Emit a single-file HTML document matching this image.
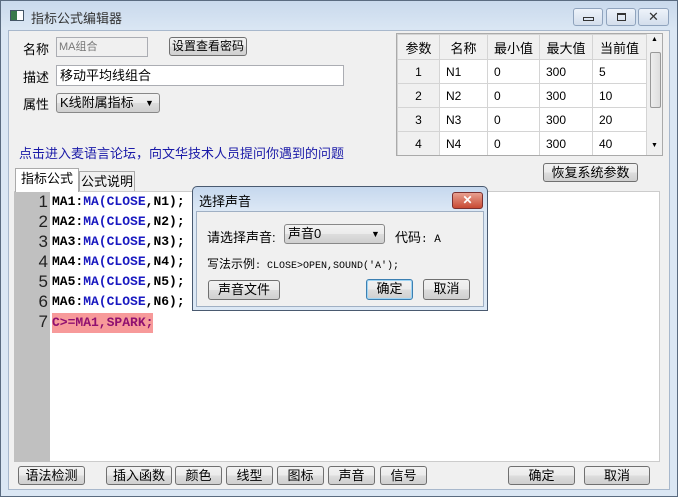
<!DOCTYPE html>
<html><head><meta charset="utf-8"><style>
*{box-sizing:border-box;margin:0;padding:0}
body{width:678px;height:497px;overflow:hidden;background:#dbe7f4;font-family:"Liberation Sans","Noto Sans CJK SC",sans-serif;font-size:12px;color:#000;position:relative}
.a{position:absolute}
.win{left:0;top:0;width:678px;height:497px;border:1px solid #5a6b80;background:linear-gradient(#c9d9ec,#dbe7f4 30px)}
.client{left:8px;top:30px;width:662px;height:460px;background:#f0f0f0;border:1px solid #a8b8cc}
.btn{position:absolute;border:1px solid #707070;border-radius:3px;background:linear-gradient(#f2f2f2,#ebebeb 50%,#dddddd 51%,#cfcfcf);text-align:center;font-size:13px;line-height:17px;white-space:nowrap;overflow:hidden}
.inp{position:absolute;border:1px solid #abadb3;background:#fff}
.tb{position:absolute;top:8px;height:18px;border:1px solid #8fa3bd;border-radius:3px;background:linear-gradient(#eef3fa,#d3deec)}
table{border-collapse:collapse}
td{border:1px solid #d4d4d4;height:24px;font-size:12px;padding-left:6px}
.code{font-family:"Liberation Mono",monospace;font-weight:bold;font-size:13px;line-height:20px;position:absolute;left:52px;white-space:pre}
.ln{position:absolute;left:14px;width:34px;text-align:right;font-family:"Liberation Sans",sans-serif;font-size:17px;line-height:20px;color:#222}
.b{color:#1818c0}
</style></head><body>
<div class="a win"></div>
<div class="a" style="left:10px;top:10px;width:14px;height:11px;border:1px solid #456;background:linear-gradient(90deg,#3a7a4a 50%,#fff 50%)"></div>
<div class="a" style="left:31px;top:8px;font-size:13px;color:#333">指标公式编辑器</div>
<div class="tb" style="left:573px;width:30px"><div class="a" style="left:9px;top:8px;width:11px;height:4px;border:1px solid #333"></div></div>
<div class="tb" style="left:606px;width:30px"><div class="a" style="left:10px;top:4px;width:9px;height:8px;border:1px solid #333;border-top-width:2px"></div></div>
<div class="tb" style="left:638px;width:31px;text-align:center;font-size:13px;line-height:15px;color:#333">✕</div>
<div class="a client"></div>

<div class="a" style="left:23px;top:39px;font-size:13px">名称</div>
<div class="inp" style="left:56px;top:37px;width:92px;height:20px;background:#f0f0f0;color:#777;font-size:11px;padding-left:2px">MA组合</div>
<div class="btn" style="left:169px;top:37px;width:78px;height:19px;font-size:12px">设置查看密码</div>
<div class="a" style="left:23px;top:67px;font-size:13px">描述</div>
<div class="inp" style="left:56px;top:65px;width:288px;height:21px;font-size:13px;line-height:19px;padding-left:3px">移动平均线组合</div>
<div class="a" style="left:23px;top:94px;font-size:13px">属性</div>
<div class="btn" style="left:56px;top:93px;width:104px;height:20px;text-align:left;padding-left:3px;line-height:18px;border-color:#888">K线附属指标<span class="a" style="left:88px;top:0;font-size:9px">▼</span></div>
<div class="a" style="left:19px;top:143px;font-size:13px;color:#1a1aa8">点击进入麦语言论坛，向文华技术人员提问你遇到的问题</div>

<div class="a" style="left:396px;top:33px;width:267px;height:123px;border:1px solid #aaa;background:#fff;overflow:hidden">
<table style="width:250px">
<tr style="background:#f0f0f0;text-align:center"><td style="width:42px;padding:0;height:25px;font-size:13px">参数</td><td style="width:48px;padding:0;font-size:13px">名称</td><td style="width:52px;padding:0;font-size:13px">最小值</td><td style="width:53px;padding:0;font-size:13px">最大值</td><td style="padding:0;font-size:13px">当前值</td></tr>
<tr><td style="background:#f0f0f0;text-align:center;padding:0">1</td><td>N1</td><td>0</td><td>300</td><td>5</td></tr>
<tr><td style="background:#f0f0f0;text-align:center;padding:0">2</td><td>N2</td><td>0</td><td>300</td><td>10</td></tr>
<tr><td style="background:#f0f0f0;text-align:center;padding:0">3</td><td>N3</td><td>0</td><td>300</td><td>20</td></tr>
<tr><td style="background:#f0f0f0;text-align:center;padding:0">4</td><td>N4</td><td>0</td><td>300</td><td>40</td></tr>
</table>
<div class="a" style="left:250px;top:0;width:16px;height:122px;background:#f0f0f0"></div>
<div class="a" style="left:253px;top:18px;width:11px;height:56px;border:1px solid #999;border-radius:2px;background:linear-gradient(90deg,#eee,#ddd)"></div>
<div class="a" style="left:254px;top:2px;font-size:7px">▲</div>
<div class="a" style="left:254px;top:108px;font-size:7px">▼</div>
</div>
<div class="btn" style="left:543px;top:163px;width:95px;height:19px">恢复系统参数</div>

<div class="a" style="left:79px;top:171px;width:56px;height:21px;border:1px solid #aaa;background:#f0f0f0;font-size:13px;text-align:center;line-height:19px">公式说明</div>
<div class="a" style="left:15px;top:168px;width:64px;height:24px;border:1px solid #aaa;border-bottom:none;background:#fff;font-size:13px;text-align:center;line-height:20px;z-index:2">指标公式</div>

<div class="a" style="left:14px;top:191px;width:646px;height:271px;background:#fff;border:1px solid #ccc"></div>
<div class="a" style="left:14px;top:192px;width:36px;height:270px;background:#c0c0c0"></div>
<div class="ln" style="top:192px">1</div><div class="ln" style="top:212px">2</div><div class="ln" style="top:232px">3</div><div class="ln" style="top:252px">4</div><div class="ln" style="top:272px">5</div><div class="ln" style="top:292px">6</div><div class="ln" style="top:312px">7</div>
<div class="code" style="top:192px">MA1:<span class="b">MA(CLOSE</span>,N1);</div>
<div class="code" style="top:212px">MA2:<span class="b">MA(CLOSE</span>,N2);</div>
<div class="code" style="top:232px">MA3:<span class="b">MA(CLOSE</span>,N3);</div>
<div class="code" style="top:252px">MA4:<span class="b">MA(CLOSE</span>,N4);</div>
<div class="code" style="top:272px">MA5:<span class="b">MA(CLOSE</span>,N5);</div>
<div class="code" style="top:292px">MA6:<span class="b">MA(CLOSE</span>,N6);</div>
<div class="code" style="top:313px;background:#f79a9a;color:#901070;height:20px">C&gt;=MA1,SPARK;</div>

<div class="btn" style="left:18px;top:466px;width:67px;height:19px">语法检测</div>
<div class="btn" style="left:106px;top:466px;width:66px;height:19px">插入函数</div>
<div class="btn" style="left:175px;top:466px;width:47px;height:19px">颜色</div>
<div class="btn" style="left:226px;top:466px;width:47px;height:19px">线型</div>
<div class="btn" style="left:277px;top:466px;width:47px;height:19px">图标</div>
<div class="btn" style="left:328px;top:466px;width:47px;height:19px">声音</div>
<div class="btn" style="left:380px;top:466px;width:47px;height:19px">信号</div>
<div class="btn" style="left:508px;top:466px;width:67px;height:19px">确定</div>
<div class="btn" style="left:584px;top:466px;width:66px;height:19px">取消</div>

<div class="a" style="left:192px;top:186px;width:296px;height:125px;border:1px solid #4a5a70;border-radius:5px 5px 0 0;background:linear-gradient(#c6d8ee,#dce8f5 24px)"></div>
<div class="a" style="left:199px;top:191px;font-size:13px">选择声音</div>
<div class="a" style="left:452px;top:192px;width:31px;height:17px;border:1px solid #7a3030;border-radius:3px;background:linear-gradient(#e8a090,#c84a34);color:#fff;text-align:center;font-size:12px;line-height:15px;font-weight:bold">✕</div>
<div class="a" style="left:196px;top:211px;width:288px;height:96px;background:#f0f0f0;border:1px solid #a0b0c4"></div>
<div class="a" style="left:207px;top:227px;font-size:13px">请选择声音:</div>
<div class="btn" style="left:284px;top:224px;width:101px;height:20px;text-align:left;padding-left:3px;line-height:18px;border-color:#888">声音0<span class="a" style="left:86px;top:0;font-size:9px">▼</span></div>
<div class="a" style="left:395px;top:227px;font-size:13px">代码<span style="font-family:'Liberation Mono',monospace;font-size:11px">: A</span></div>
<div class="a" style="left:207px;top:255px;font-size:12px">写法示例<span style="font-family:'Liberation Mono',monospace;font-size:10px">: CLOSE&gt;OPEN,SOUND('A');</span></div>
<div class="btn" style="left:208px;top:280px;width:72px;height:20px">声音文件</div>
<div class="btn" style="left:366px;top:279px;width:47px;height:21px;border-color:#3c7fb1;box-shadow:inset 0 0 0 1px #9ed4f4">确定</div>
<div class="btn" style="left:423px;top:279px;width:47px;height:21px">取消</div>
</body></html>
